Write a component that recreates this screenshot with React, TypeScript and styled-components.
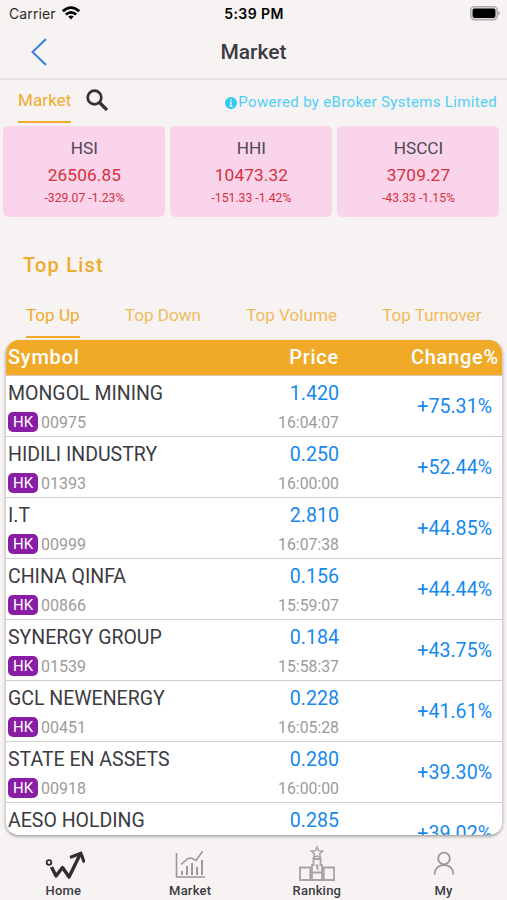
import React from 'react';
import styled, { createGlobalStyle } from 'styled-components';

const GlobalStyle = createGlobalStyle`
    * {
        box-sizing: border-box;
    }
    body {
        margin: 0;
        background: #f7f3f3;
        font-family: Roboto, sans-serif;
        color: #3b3b42;
    }
`;

const Screen = styled.div`
    width: 507px;
    height: 900px;
    overflow: hidden;
    display: flex;
    flex-direction: column;
    background: #f7f3f3;
    white-space: nowrap;
`;

const StatusBar = styled.div`
    display: grid;
    grid-template-columns: 1fr auto 1fr;
    align-items: center;
    height: 27px;
    padding: 0 7px 0 9px;
    font-family: Inter, sans-serif;
    font-size: 14px;
    line-height: 27px;
    color: #111;
`;

const Carrier = styled.div`
    display: flex;
    align-items: center;
    gap: 6px;
    letter-spacing: 0.1px;
    color: #2b2b2b;

    svg {
        margin-bottom: 2px;
    }
`;

const Clock = styled.div`
    margin-left: -1px;
    font-weight: 600;
    letter-spacing: 0.4px;
    color: #000;
`;

const BatteryIcon = styled.svg`
    justify-self: end;
`;

const NavBar = styled.header`
    display: grid;
    grid-template-columns: 80px 1fr 80px;
    align-items: center;
    height: 53px;
    border-bottom: 2px solid #e8e4e4;
`;

const BackButton = styled.button`
    width: 80px;
    height: 50px;
    padding: 0 0 2px 30px;
    border: 0;
    background: none;
    text-align: left;
    line-height: 0;
`;

const Title = styled.h1`
    margin: 0;
    padding-bottom: 1px;
    font-size: 21px;
    font-weight: 500;
    line-height: 24px;
    text-align: center;
`;

const MarketBar = styled.div`
    display: flex;
    align-items: flex-start;
    height: 46px;
    padding: 0 10px 0 18px;
`;

const MarketTab = styled.div`
    height: 43px;
    padding-top: 8px;
    border-bottom: 2px solid #efab2c;
    font-size: 17px;
    line-height: 24px;
    letter-spacing: 0.1px;
    color: #efab2c;
`;

const SearchIcon = styled.svg`
    margin: 6px 0 0 12px;
`;

const PoweredBy = styled.div`
    display: flex;
    align-items: center;
    margin-left: auto;
    padding-top: 11px;
    font-size: 15px;
    line-height: 22px;
    letter-spacing: 0.33px;
    color: #4fd0f7;
`;

const IndexCards = styled.div`
    display: grid;
    grid-template-columns: repeat(3, 1fr);
    gap: 5px;
    height: 91px;
    padding: 0 7.5px 0 3.4px;
`;

const IndexCard = styled.div`
    padding-top: 8px;
    border-radius: 5px;
    background: #fad4ea;
    text-align: center;
`;

const IndexName = styled.div`
    font-size: 17.2px;
    line-height: 28px;
    color: #4d4854;
`;

const IndexPrice = styled.div`
    font-size: 17.3px;
    line-height: 26px;
    letter-spacing: 0.1px;
    color: #d5303c;
`;

const IndexChange = styled.div`
    font-size: 12.2px;
    line-height: 21px;
    color: #d5303c;
`;

const SectionTitle = styled.h2`
    margin: 33px 0 0 23px;
    font-size: 20px;
    font-weight: 500;
    line-height: 30px;
    letter-spacing: 1.2px;
    color: #efab2c;
`;

const Tabs = styled.div`
    display: flex;
    justify-content: space-between;
    height: 60px;
    padding: 22px 25.5px 0 26px;
`;

const Tab = styled.div<{ $active?: boolean }>`
    height: 36px;
    border-bottom: 2px solid ${({ $active }) => ($active ? '#efab2c' : 'transparent')};
    font-size: 17.1px;
    line-height: 26px;
    color: ${({ $active }) => ($active ? '#efab2c' : '#f1bb5d')};
`;

const Table = styled.div`
    height: 496px;
    margin: 0 4px 0 5px;
    overflow: hidden;
    border: 1px solid #d6d2d2;
    border-top: 0;
    border-bottom: 1px solid #b5b1b1;
    border-radius: 14px;
    background: #fff;
    box-shadow: 0 1px 3px rgba(0, 0, 0, 0.28);
`;

const TableHead = styled.div`
    display: grid;
    grid-template-columns: 166px 165px 1fr;
    height: 36px;
    padding: 0 3px 0 2px;
    border-bottom: 1px solid #d8c8b0;
    background: #f1aa28;
    font-size: 20px;
    font-weight: 500;
    line-height: 34px;
    letter-spacing: 0.75px;
    color: #fff;
`;

const HeadCell = styled.div<{ $right?: boolean }>`
    text-align: ${({ $right }) => ($right ? 'right' : 'left')};
`;

const Row = styled.div`
    display: grid;
    grid-template-columns: 220px 111px 1fr;
    height: 61.05px;
    padding: 0 10px 0 2px;
    border-bottom: 1px solid #d3cece;
`;

const StockName = styled.div`
    font-size: 19.5px;
    line-height: 35px;
`;

const StockCode = styled.div`
    display: flex;
    align-items: center;
    gap: 3px;
    height: 22px;
    font-size: 16px;
    color: #9b9b9b;
`;

const MarketBadge = styled.span`
    width: 30px;
    height: 20px;
    border-radius: 5px;
    background: #8a1da6;
    font-size: 15px;
    line-height: 20px;
    text-align: center;
    color: #fff;
`;

const PriceCell = styled.div`
    text-align: right;
    font-size: 19.6px;
    line-height: 35px;
    color: #1689ee;
`;

const Time = styled.div`
    font-size: 15.8px;
    line-height: 23px;
    color: #9b9b9b;
`;

const Change = styled.div`
    text-align: right;
    font-size: 19.6px;
    line-height: 61px;
    color: #1689ee;
`;

const TabBar = styled.nav`
    display: grid;
    grid-template-columns: repeat(4, 1fr);
    height: 64px;
    padding-top: 9px;
`;

const TabBarItem = styled.div`
    display: flex;
    flex-direction: column;
    align-items: center;
    font-size: 13px;
    font-weight: 500;
    line-height: 16px;
    letter-spacing: 0.2px;
`;

const IconSlot = styled.div`
    display: flex;
    align-items: flex-end;
    justify-content: center;
    height: 38px;
    padding-bottom: 2px;
`;

const indices = [
    { name: 'HSI', price: '26506.85', change: '-329.07 -1.23%' },
    { name: 'HHI', price: '10473.32', change: '-151.33 -1.42%' },
    { name: 'HSCCI', price: '3709.27', change: '-43.33 -1.15%' },
];

const stocks = [
    { name: 'MONGOL MINING', code: '00975', price: '1.420', time: '16:04:07', change: '+75.31%' },
    { name: 'HIDILI INDUSTRY', code: '01393', price: '0.250', time: '16:00:00', change: '+52.44%' },
    { name: 'I.T', code: '00999', price: '2.810', time: '16:07:38', change: '+44.85%' },
    { name: 'CHINA QINFA', code: '00866', price: '0.156', time: '15:59:07', change: '+44.44%' },
    { name: 'SYNERGY GROUP', code: '01539', price: '0.184', time: '15:58:37', change: '+43.75%' },
    { name: 'GCL NEWENERGY', code: '00451', price: '0.228', time: '16:05:28', change: '+41.61%' },
    { name: 'STATE EN ASSETS', code: '00918', price: '0.280', time: '16:00:00', change: '+39.30%' },
    { name: 'AESO HOLDING', code: '', price: '0.285', time: '', change: '+39.02%' },
];

const HomeIcon = () => (
    <svg width="44" height="32" viewBox="-1 0 44 32" fill="none" stroke="#302e35">
        <circle cx="7" cy="13.5" r="2.3" strokeWidth="1.8" />
        <path d="M9.5 18l4.500 9 6.500-8.500 6.500 9.500L38 5.500" strokeWidth="3.4" strokeLinejoin="round" />
        <path d="M28 8.500l10.800-4.200 3.500 9.200" strokeWidth="3.2" />
    </svg>
);

const ChartIcon = () => (
    <svg width="32" height="32" viewBox="0 0 32 32" fill="none" stroke="#99979a" strokeWidth="1.6">
        <path d="M2.5 4v24H31" />
        <path d="M8 26v-4M13 26V17M18 26V14M23 26V18M28 26V11" strokeWidth="1.9" />
        <path d="M7 15.5l7-6q2-1 4 0l4 2 6.500-9" />
    </svg>
);

const RankingIcon = () => (
    <svg width="38" height="36" viewBox="0.5 0 38 36" fill="none" stroke="#a6a4a6" strokeWidth="1.8">
        <path d="M2.5 22.5h10.300V35H2.500zM26.200 22.500h10.300V35H26.200zM14.500 27.500h10V35h-10zM14.500 27.500V20h1.500v-6h7v6h1.500v7.500" />
        <path d="M19.500 2l1.700 3.700 4 .4-3 2.700.8 4-3.500-1.900-3.500 1.900.8-4-3-2.700 4-.4z" strokeWidth="1.5" />
        <path d="M18 20.500h2V25" strokeWidth="2" />
    </svg>
);

const UserIcon = () => (
    <svg width="24" height="32" viewBox="0 0 24 32" fill="none" stroke="#99979a" strokeWidth="1.8">
        <circle cx="12" cy="9.5" r="5.8" />
        <path d="M2.5 25.5c.4-6 4.200-9.500 9.500-9.500s9.100 3.500 9.500 9.500" />
    </svg>
);

const tabBarItems = [
    { label: 'Home', icon: <HomeIcon /> },
    { label: 'Market', icon: <ChartIcon /> },
    { label: 'Ranking', icon: <RankingIcon /> },
    { label: 'My', icon: <UserIcon /> },
];

const App: React.FC = () => {
    return (
        <Screen>
            <GlobalStyle />
            <StatusBar>
                <Carrier>
                    <span>Carrier</span>
                    <svg width="18" height="14" viewBox="0 0 18 14" fill="none" stroke="#000" strokeWidth="2.7">
                        <path d="M0.8 5.2Q9-2 17.2 5.2" />
                        <path d="M3.8 8.6Q9 4 14.2 8.6" />
                        <path d="M9 13.5L6.2 10.5Q9 8.4 11.8 10.5z" fill="#000" stroke="none" />
                    </svg>
                </Carrier>
                <Clock>5:39 PM</Clock>
                <BatteryIcon width="30" height="15" viewBox="0 0 30 15">
                    <rect x="0.7" y="0.7" width="26.6" height="13.2" rx="3.8" fill="#dad6d6" stroke="#aaa7a7" strokeWidth="1.3" />
                    <rect x="2.6" y="2.6" width="22.8" height="9.4" rx="2" fill="#000" />
                    <path d="M28.3 5v4.6q1.5-.7 1.5-2.3T28.3 5z" fill="#aaa7a7" />
                </BatteryIcon>
            </StatusBar>
            <NavBar>
                <BackButton aria-label="Back">
                    <svg width="18" height="28" viewBox="0 0 18 28" fill="none" stroke="#3b82dc" strokeWidth="2">
                        <path d="M16 1L2.5 14 16 27" />
                    </svg>
                </BackButton>
                <Title>Market</Title>
            </NavBar>
            <MarketBar>
                <MarketTab>Market</MarketTab>
                <SearchIcon width="28" height="28" viewBox="0 0 28 28" fill="none" stroke="#343238">
                    <circle cx="11.5" cy="11.5" r="6.8" strokeWidth="2.7" />
                    <path d="M16.5 16.5l7.5 7.5" strokeWidth="3.2" />
                </SearchIcon>
                <PoweredBy>
                    <svg width="14" height="14" viewBox="0 0 14 14">
                        <circle cx="7" cy="8" r="6" fill="#32c8f5" />
                        <path d="M7 4.2v1.8M5.7 7.4H7v3.8M5.5 11.2h3" stroke="#e8f8fc" strokeWidth="1.4" fill="none" />
                    </svg>
                    <span>Powered by eBroker Systems Limited</span>
                </PoweredBy>
            </MarketBar>
            <IndexCards>
                {indices.map((item) => (
                    <IndexCard key={item.name}>
                        <IndexName>{item.name}</IndexName>
                        <IndexPrice>{item.price}</IndexPrice>
                        <IndexChange>{item.change}</IndexChange>
                    </IndexCard>
                ))}
            </IndexCards>
            <SectionTitle>Top List</SectionTitle>
            <Tabs>
                <Tab $active>Top Up</Tab>
                <Tab>Top Down</Tab>
                <Tab>Top Volume</Tab>
                <Tab>Top Turnover</Tab>
            </Tabs>
            <Table>
                <TableHead>
                    <HeadCell>Symbol</HeadCell>
                    <HeadCell $right>Price</HeadCell>
                    <HeadCell $right>Change%</HeadCell>
                </TableHead>
                {stocks.map((stock) => (
                    <Row key={stock.name}>
                        <div>
                            <StockName>{stock.name}</StockName>
                            {stock.code && (
                                <StockCode>
                                    <MarketBadge>HK</MarketBadge>
                                    {stock.code}
                                </StockCode>
                            )}
                        </div>
                        <PriceCell>
                            {stock.price}
                            <Time>{stock.time}</Time>
                        </PriceCell>
                        <Change>{stock.change}</Change>
                    </Row>
                ))}
            </Table>
            <TabBar>
                {tabBarItems.map(({ label, icon }) => (
                    <TabBarItem key={label}>
                        <IconSlot>{icon}</IconSlot>
                        {label}
                    </TabBarItem>
                ))}
            </TabBar>
        </Screen>
    );
};

export default App;
